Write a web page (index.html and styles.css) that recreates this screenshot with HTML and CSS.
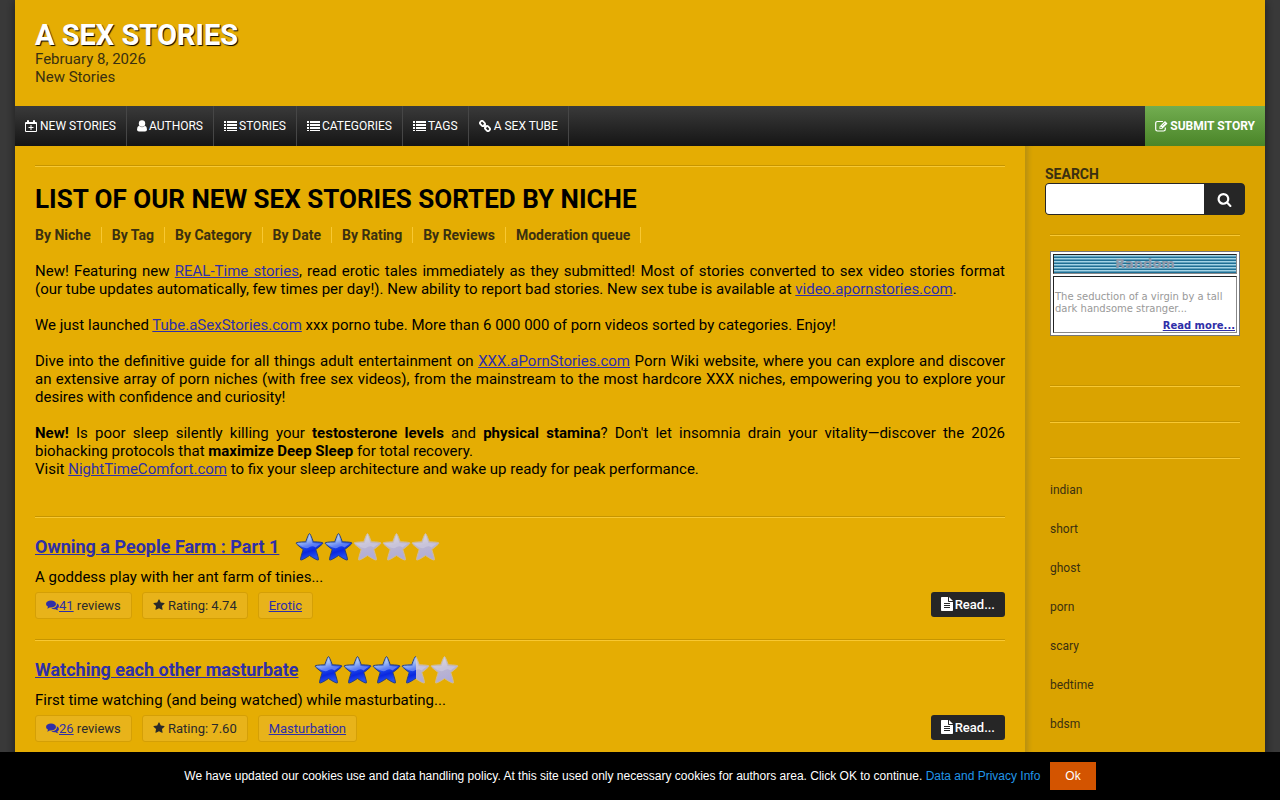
FILE: index.html
```html
<!DOCTYPE html>
<html lang="en">
<head>
    <meta charset="UTF-8">
    <title>A Sex Stories</title>
    <link rel="stylesheet" href="styles.css">
</head>
<body>
<svg class="sprite" aria-hidden="true">
  <defs>
    <linearGradient id="blue" x1="0" y1="0" x2="0.3" y2="1">
      <stop offset="0" stop-color="#d4e2fa"/>
      <stop offset="0.35" stop-color="#7fa4ee"/>
      <stop offset="0.55" stop-color="#1c48ee"/>
      <stop offset="0.75" stop-color="#0a28e0"/>
      <stop offset="1" stop-color="#2450f0"/>
    </linearGradient>
    <linearGradient id="pale" x1="0" y1="0" x2="0.3" y2="1">
      <stop offset="0" stop-color="#dedada"/>
      <stop offset="0.5" stop-color="#bcb6d0"/>
      <stop offset="1" stop-color="#b0acd8"/>
    </linearGradient>
    <clipPath id="half"><rect x="0" y="0" width="15" height="30"/></clipPath>
    <path id="star-shape" d="M14.500 1.500 Q15.300 1.500 18.300 9.800 Q27.500 10 28 11 Q28 12 20.800 17.500 Q24 27 23.300 28 Q22 28.500 14.500 23.500 Q7 28.500 5.700 28 Q5 27 8.200 17.500 Q1 12 1 11 Q1.500 10 10.700 9.800 Q13.700 1.500 14.500 1.500 Z"/>
    <path id="star-shine" d="M14.500 3.500 L17.500 11 L26 11.500 L20.500 15.500 Q17 12.800 13 16 Q8 17 2.800 11.300 L11.500 11 Z"/>
  </defs>
  <symbol id="star-on" viewBox="0 0 29 30">
    <use href="#star-shape" fill="url(#blue)" stroke="#2c4276" stroke-width="1"/>
    <use href="#star-shine" fill="#dbe8ff" opacity="0.35"/>
  </symbol>
  <symbol id="star-off" viewBox="0 0 29 30">
    <use href="#star-shape" fill="url(#pale)" stroke="#d2bc90" stroke-width="1"/>
    <use href="#star-shine" fill="#fff" opacity="0.2"/>
  </symbol>
  <symbol id="star-half" viewBox="0 0 29 30">
    <use href="#star-off"/>
    <g clip-path="url(#half)"><use href="#star-on"/></g>
  </symbol>
  <symbol id="calendar" viewBox="0 0 12 12" preserveAspectRatio="xMinYMid">
    <path fill-rule="evenodd" d="M1 2h1V1q0-1 1-1t1 1v1h4V1q0-1 1-1t1 1v1H11q1 0 1 1v8q0 1-1 1H1q-1 0-1-1V3q0-1 1-1zM1 4v7h10V4zM5.500 5h1v2h2v1h-2v2h-1V8h-2V7h2z"/>
  </symbol>
  <symbol id="user" viewBox="0 0 10 12" preserveAspectRatio="xMinYMid">
    <circle cx="5" cy="3.500" r="3.200"/>
    <path d="M2 5.800Q0 6.500 0 9.500 0 11.500 2 11.500H8Q10 11.500 10 9.500 10 6.500 8 5.800 5 8.500 2 5.800z"/>
  </symbol>
  <symbol id="list" viewBox="0 0 13 12">
    <path d="M0 1h2v2H0zM3 1h10v2H3zM0 4h2v2H0zM3 4h10v2H3zM0 7h2v2H0zM3 7h10v2H3zM0 10h2v1H0zM3 10h10v1H3z"/>
  </symbol>
  <symbol id="link" viewBox="0 0 12 12" preserveAspectRatio="xMinYMid">
    <g fill="none" stroke="currentColor" stroke-width="1.800">
      <rect x="-2.600" y="-1.900" width="5.200" height="3.800" rx="1.600" transform="translate(3.500 3.500) rotate(45)"/>
      <rect x="-2.600" y="-1.900" width="5.200" height="3.800" rx="1.600" transform="translate(8.500 8.500) rotate(45)"/>
      <path d="M4.500 4.500l3 3"/>
    </g>
  </symbol>
  <symbol id="edit" viewBox="0 0 13 12">
    <path d="M8 1.500H2.500Q.7 1.500.7 3.200V9.300Q.7 11 2.500 11H8.500Q10.300 11 10.300 9.300V7.500" fill="none" stroke="currentColor" stroke-width="1.200"/>
    <path fill-rule="evenodd" d="M4.500 6.500L10 1l2.500 2.500L7 9H4.500zM5.300 7v1.200h1.200l.5-.5L5.800 6.500zM7 5.700l.4.400 3-3-.4-.4z"/>
  </symbol>
  <symbol id="search" viewBox="0 0 1792 1792">
    <path d="M1216 832q0-185-131.500-316.500T768 384 451.500 515.500 320 832t131.500 316.500T768 1280t316.500-131.500T1216 832zm512 832q0 52-38 90t-90 38q-54 0-90-38l-343-342q-179 124-399 124-143 0-273.500-55.500t-225-150-150-225T64 832t55.500-273.500 150-225 225-150T768 128t273.500 55.500 225 150 150 225T1472 832q0 220-124 399l343 343q37 37 37 90z"/>
  </symbol>
  <symbol id="comments" viewBox="0 0 13 12">
    <path d="M5 1.500C7.800 1.500 10 3 10 5S7.800 8.500 5 8.500q-.7 0-1.300-.1Q2.500 9.300 1 9.500q.8-.8 1-1.700Q0 6.700 0 5C0 3 2.200 1.500 5 1.500z"/>
    <path d="M10.800 4.300Q13 5.200 13 7q0 1.500-1.700 2.500.2 1 1.200 1.700-1.700-.1-2.900-1Q7 10.500 5.200 9.300 9.800 9.200 10.800 6.200z"/>
  </symbol>
  <symbol id="star" viewBox="0 0 1792 1792">
    <path d="M1728 647q0 22-26 48l-363 354 86 500q1 7 1 20 0 21-10.500 35.500t-30.500 14.500q-19 0-40-12l-449-236-449 236q-22 12-40 12-21 0-31.500-14.500t-10.500-35.500q0-6 2-20l86-500-364-354q-25-27-25-48 0-37 56-46l502-73 225-455q19-41 49-41t49 41l225 455 502 73q56 9 56 46z"/>
  </symbol>
  <symbol id="file" viewBox="0 0 12 14">
    <path fill-rule="evenodd" d="M.8 0H7v4.200q0 .8.800.800H12v8.200q0 .8-.8.800H.8Q0 14 0 13.200V.8Q0 0 .8 0zM3 6v1h6V6zM3 8v1h6V8zM3 10v1h6v-1z"/>
    <path d="M8 0l4 4H8z"/>
  </symbol>
</svg>

<div class="page">
  <header class="header">
    <div class="logo">A SEX STORIES</div>
    <div>February 8, 2026</div>
    <div>New Stories</div>
  </header>

  <nav class="menu">
    <a href="#"><svg class="icon"><use href="#calendar"/></svg>New Stories</a>
    <a href="#"><svg class="icon narrow"><use href="#user"/></svg>Authors</a>
    <a href="#"><svg class="icon"><use href="#list"/></svg>Stories</a>
    <a href="#"><svg class="icon"><use href="#list"/></svg>Categories</a>
    <a href="#"><svg class="icon"><use href="#list"/></svg>Tags</a>
    <a href="#"><svg class="icon"><use href="#link"/></svg>A Sex Tube</a>
    <a href="#" class="submit"><svg class="icon"><use href="#edit"/></svg>Submit Story</a>
  </nav>

  <div class="columns">
    <main class="content">
      <hr>
      <h1>LIST OF OUR NEW SEX STORIES SORTED BY NICHE</h1>
      <div class="sorting">
        <a href="#">By Niche</a>
        <a href="#">By Tag</a>
        <a href="#">By Category</a>
        <a href="#">By Date</a>
        <a href="#">By Rating</a>
        <a href="#">By Reviews</a>
        <a href="#">Moderation queue</a>
      </div>
      <div class="intro">
        <p>New! Featuring new <a href="#">REAL-Time stories</a>, read erotic tales immediately as they submitted! Most of stories converted to sex video stories format (our tube updates automatically, few times per day!). New ability to report bad stories. New sex tube is available at <a href="#">video.apornstories.com</a>.</p>
        <p>We just launched <a href="#">Tube.aSexStories.com</a> xxx porno tube. More than 6 000 000 of porn videos sorted by categories. Enjoy!</p>
        <p>Dive into the definitive guide for all things adult entertainment on <a href="#">XXX.aPornStories.com</a> Porn Wiki website, where you can explore and discover an extensive array of porn niches (with free sex videos), from the mainstream to the most hardcore XXX niches, empowering you to explore your desires with confidence and curiosity!</p>
        <p><b>New!</b> Is poor sleep silently killing your <b>testosterone levels</b> and <b>physical stamina</b>? Don't let insomnia drain your vitality—discover the 2026 biohacking protocols that <b>maximize Deep Sleep</b> for total recovery.<br>Visit <a href="#">NightTimeComfort.com</a> to fix your sleep architecture and wake up ready for peak performance.</p>
      </div>

      <article class="story">
        <div class="story-head">
          <h2><a href="#">Owning a People Farm : Part 1</a></h2>
          <div class="stars">
            <svg><use href="#star-on"/></svg>
            <svg><use href="#star-on"/></svg>
            <svg><use href="#star-off"/></svg>
            <svg><use href="#star-off"/></svg>
            <svg><use href="#star-off"/></svg>
          </div>
        </div>
        <p>A goddess play with her ant farm of tinies...</p>
        <div class="story-info">
          <span class="chip"><a href="#"><svg class="icon"><use href="#comments"/></svg>41</a> reviews</span>
          <span class="chip"><svg class="icon rating"><use href="#star"/></svg> Rating: 4.74</span>
          <span class="chip"><a href="#">Erotic</a></span>
          <a href="#" class="read"><svg class="icon"><use href="#file"/></svg>Read...</a>
        </div>
      </article>

      <article class="story">
        <div class="story-head">
          <h2><a href="#">Watching each other masturbate</a></h2>
          <div class="stars">
            <svg><use href="#star-on"/></svg>
            <svg><use href="#star-on"/></svg>
            <svg><use href="#star-on"/></svg>
            <svg><use href="#star-half"/></svg>
            <svg><use href="#star-off"/></svg>
          </div>
        </div>
        <p>First time watching (and being watched) while masturbating...</p>
        <div class="story-info">
          <span class="chip"><a href="#"><svg class="icon"><use href="#comments"/></svg>26</a> reviews</span>
          <span class="chip"><svg class="icon rating"><use href="#star"/></svg> Rating: 7.60</span>
          <span class="chip"><a href="#">Masturbation</a></span>
          <a href="#" class="read"><svg class="icon"><use href="#file"/></svg>Read...</a>
        </div>
      </article>
    </main>

    <aside class="sidebar">
      <form class="search">
        <label for="q">SEARCH</label>
        <div class="search-box">
          <input type="text" id="q" name="q">
          <button type="button" aria-label="Search"><svg><use href="#search"/></svg></button>
        </div>
      </form>
      <hr>
      <div class="random">
        <div class="random-title">Random</div>
        <div class="random-body">
          <p>The seduction of a virgin by a tall dark handsome stranger...</p>
          <a href="#">Read more...</a>
        </div>
      </div>
      <hr>
      <hr>
      <hr>
      <ul class="tags">
        <li><a href="#">indian</a></li>
        <li><a href="#">short</a></li>
        <li><a href="#">ghost</a></li>
        <li><a href="#">porn</a></li>
        <li><a href="#">scary</a></li>
        <li><a href="#">bedtime</a></li>
        <li><a href="#">bdsm</a></li>
      </ul>
    </aside>
  </div>
</div>

<div class="cookies">
  <span>We have updated our cookies use and data handling policy. At this site used only necessary cookies for authors area. Click OK to continue. <a href="#">Data and Privacy Info</a></span>
  <button type="button">Ok</button>
</div>
</body>
</html>
```
FILE: styles.css
```css
* {
  box-sizing: border-box;
}

body {
  margin: 0;
  background-color: #3a3a3a;
  font-family: Roboto, sans-serif;
  font-size: 15px;
  line-height: 18px;
  color: #000;
}

a {
  color: #2f2fa8;
}

hr {
  height: 2px;
  margin: 0;
  border: 0;
  border-top: 1px solid #c69500;
  border-bottom: 1px solid #f8c832;
}

.sprite {
  position: absolute;
  width: 0;
  height: 0;
}

.icon {
  width: 13px;
  height: 12px;
  fill: currentColor;
  vertical-align: -1px;
}

.page {
  display: flex;
  flex-direction: column;
  min-height: 100vh;
  margin: 0 15px;
  background-color: #e5ad03;
  box-shadow: 0 0 10px rgba(0, 0, 0, 0.5);
}

.header {
  padding: 20px;
  color: #3a3010;
}

.logo {
  font-size: 29px;
  line-height: 30px;
  font-weight: bold;
  color: #fff;
  text-shadow: 1px 1px 1px #000;
}

/* top menu */
.menu {
  display: flex;
  height: 40px;
  background: linear-gradient(#3a3a3a, #151515);
}

.menu a {
  display: flex;
  align-items: center;
  gap: 2px;
  padding: 0 10px;
  border-right: 1px solid #464646;
  color: #fff;
  font-size: 12px;
  text-transform: uppercase;
  text-decoration: none;
}

.menu .narrow {
  width: 10px;
}

.menu .submit {
  margin-left: auto;
  border-right: 0;
  background: linear-gradient(#72ad50, #4a8528);
  font-weight: bold;
}

.columns {
  display: flex;
  flex: 1;
}

.content {
  flex: 1;
  padding: 19px 20px 68px;
}

h1 {
  margin: 17px 0 13px;
  font-size: 26px;
  line-height: 30px;
  font-weight: bold;
}

/* sort links */
.sorting {
  display: flex;
  gap: 10px;
  margin-bottom: 19px;
}

.sorting a {
  padding-right: 10px;
  border-right: 1px solid #f8c832;
  color: #3a3010;
  font-size: 14px;
  line-height: 16px;
  font-weight: bold;
  text-decoration: none;
}

.intro {
  margin-bottom: 38px;
  text-align: justify;
}

.intro p {
  margin: 0 0 18px;
}

/* stories */
.story {
  padding: 14px 0 20px;
  border-top: 1px solid #c69500;
  box-shadow: inset 0 1px #f8c832;
}

.story-head {
  display: flex;
  align-items: center;
  gap: 16px;
}

.story h2 {
  margin: 0;
  font-size: 18px;
  line-height: 22px;
}

.stars {
  display: flex;
}

.stars svg {
  width: 29px;
  height: 32px;
}

.story p {
  margin: 5px 0 6px;
}

.story-info {
  display: flex;
  align-items: flex-start;
  gap: 10px;
}

.chip {
  padding: 4px 10px;
  border: 1px solid #d49f06;
  border-radius: 3px;
  background-color: #e8b31a;
  color: #2a2a2a;
  font-size: 13px;
  line-height: 17px;
}

.rating {
  width: 12px;
}

.read {
  margin-left: auto;
  padding: 4px 10px 3px;
  border-radius: 3px;
  background-color: #262626;
  color: #fff;
  font-size: 13px;
  font-weight: 500;
  text-decoration: none;
}

.read .icon {
  width: 12px;
  height: 14px;
  margin-right: 2px;
  vertical-align: -2px;
}

/* right column */
.sidebar {
  width: 240px;
  padding: 20px 20px 68px;
  background-color: #daa300;
  box-shadow: inset 7px 0 5px -4px rgba(100, 100, 60, 0.3);
}

.search label {
  display: block;
  line-height: 17px;
  font-size: 14px;
  font-weight: bold;
  color: #3a3010;
}

.search-box {
  display: flex;
  height: 32px;
  border: 1px solid #262626;
  border-radius: 4px;
  background-color: #262626;
  overflow: hidden;
}

.search-box input {
  flex: 1;
  min-width: 0;
  padding: 0 8px;
  border: 0;
  background-color: #fff;
}

.search-box button {
  width: 40px;
  padding: 0;
  border: 0;
  background-color: #262626;
}

.search-box svg {
  display: block;
  width: 15px;
  height: 15px;
  margin: auto;
  fill: #fff;
}

.sidebar hr {
  margin: 0 5px 34px;
}

.search + hr {
  margin: 19px 5px 15px;
}

.sidebar hr:last-of-type {
  margin-bottom: 22px;
}

.random {
  margin: 0 5px 49px;
  padding: 2px;
  border: 1px solid #777;
  background-color: #fff;
  font-family: "DejaVu Sans", Verdana, sans-serif;
  font-size: 10px;
  line-height: 12px;
}

.random-title {
  margin-bottom: 2px;
  border: 1px solid;
  border-color: #222 #888 #888 #222;
  background: repeating-linear-gradient(#a4d4e6 0 1px, #5fa0bc 1px 2px, #1f6f94 2px 3px);
  color: #8f98a8;
  font-size: 13px;
  line-height: 18px;
  font-weight: bold;
  text-align: center;
}

.random-body {
  padding: 14px 1px 0;
  border: 1px solid;
  border-color: #222 #888 #888 #222;
  color: #999;
}

.random-body p {
  margin: 0 0 5px;
}

.random-body a {
  display: block;
  font-weight: bold;
  text-align: right;
}

.tags {
  margin: 0 5px;
  padding: 0;
  list-style: none;
}

.tags li {
  padding-bottom: 21px;
  font-size: 12px;
}

.tags a {
  color: #3a3010;
  text-decoration: none;
}

/* cookie notice */
.cookies {
  position: fixed;
  left: 0;
  right: 0;
  bottom: 0;
  display: flex;
  align-items: center;
  justify-content: center;
  gap: 10px;
  padding: 10px;
  background-color: #000;
  color: #fff;
  font-family: "Liberation Sans", Arial, sans-serif;
  font-size: 12px;
}

.cookies a {
  color: #2196e8;
  text-decoration: none;
}

.cookies button {
  height: 28px;
  padding: 0 15px;
  border: 0;
  background-color: #d35400;
  color: #fff;
  font-family: inherit;
  font-size: 12px;
}
```
